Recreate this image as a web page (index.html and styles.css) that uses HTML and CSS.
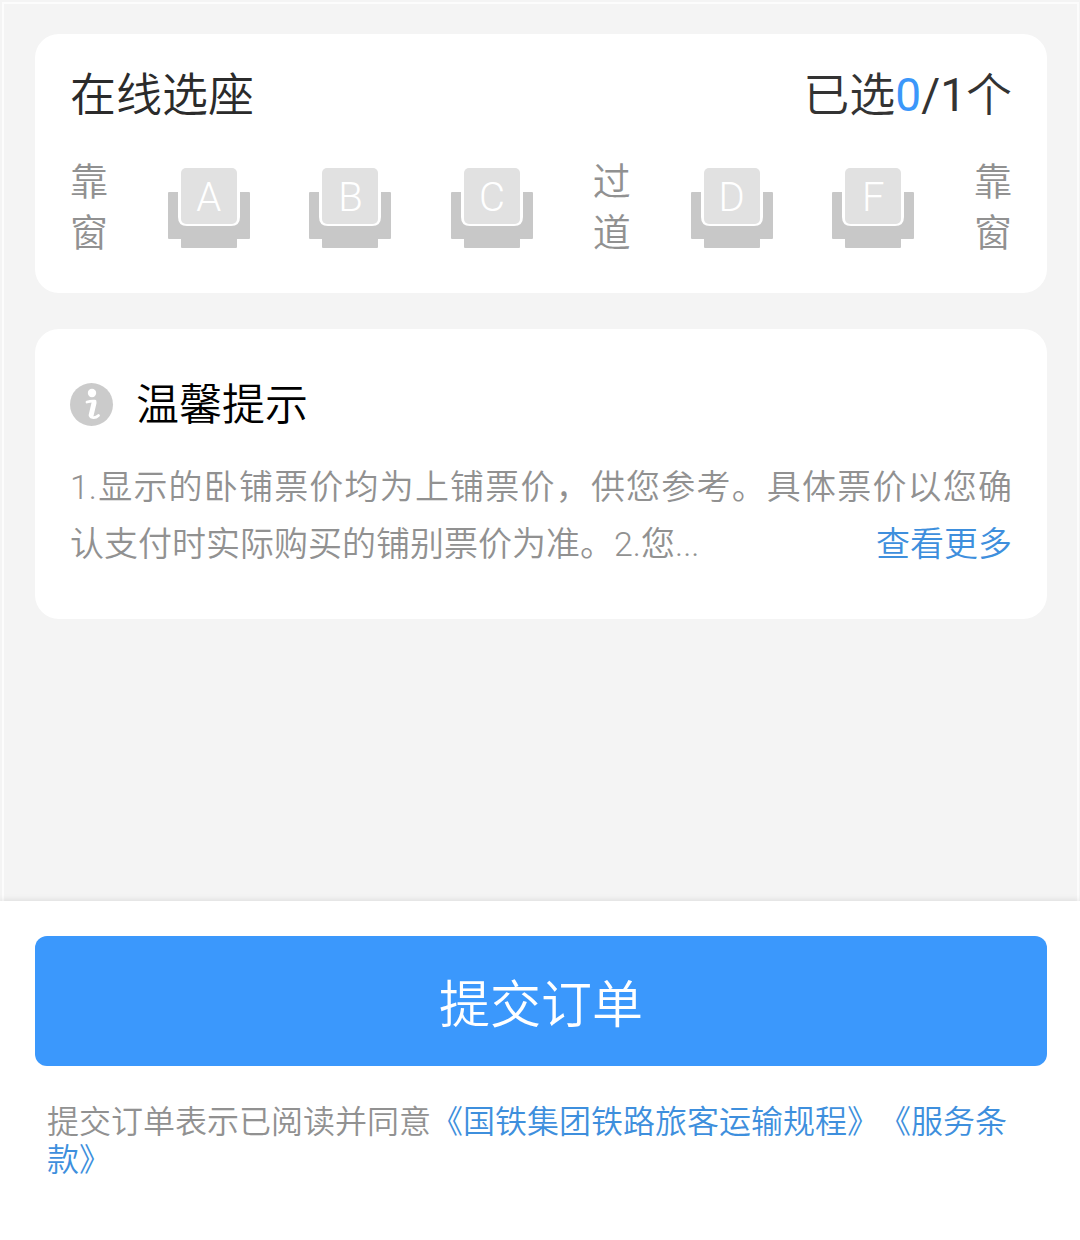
FILE: index.html
```html
<!DOCTYPE html>
<html lang="zh-CN">
<head>
<meta charset="utf-8">
<meta name="viewport" content="width=device-width, initial-scale=1">
<title>在线选座</title>
<link rel="stylesheet" href="styles.css">
</head>
<body>
<svg class="sprite" aria-hidden="true">
  <symbol id="seat" viewBox="0 0 82 80">
    <path fill="#c8c8c8" d="M1 24h9v25q0 9 9 9h44q9 0 9-9V24h9q1 0 1 1v45q0 1-1 1H69v8q0 1-1 1H14q-1 0-1-1v-8H1q-1 0-1-1V25q0-1 1-1z"/>
    <rect x="13" y="0" width="56" height="56" rx="5" fill="#e1e1e1"/>
  </symbol>
</svg>
<main class="content">
  <section class="card seats">
    <header class="card-head">
      <h1 class="title">在线选座</h1>
      <p class="count">已选<span class="digits"><span class="count-now">0</span>/1</span>个</p>
    </header>
    <div class="seat-row">
      <span class="side">靠窗</span>
      <button class="seat" type="button"><svg class="seat-icon" aria-hidden="true"><use href="#seat"/></svg><span class="seat-letter">A</span></button>
      <button class="seat" type="button"><svg class="seat-icon" aria-hidden="true"><use href="#seat"/></svg><span class="seat-letter">B</span></button>
      <button class="seat" type="button"><svg class="seat-icon" aria-hidden="true"><use href="#seat"/></svg><span class="seat-letter">C</span></button>
      <span class="side">过道</span>
      <button class="seat" type="button"><svg class="seat-icon" aria-hidden="true"><use href="#seat"/></svg><span class="seat-letter">D</span></button>
      <button class="seat" type="button"><svg class="seat-icon" aria-hidden="true"><use href="#seat"/></svg><span class="seat-letter">F</span></button>
      <span class="side">靠窗</span>
    </div>
  </section>
  <section class="card tips">
    <h2 class="tips-title">
      <svg class="info" viewBox="0 0 44 44" aria-hidden="true">
        <circle cx="21.500" cy="21.500" r="21.500" fill="#cbcbcb"/>
        <circle cx="22" cy="10" r="4.200" fill="#fff"/>
        <path d="M17 19q4-1.200 8-.8M21 34q4 1.800 7.500-1.500" fill="none" stroke="#fff" stroke-width="2.800" stroke-linecap="round"/>
        <path d="M24 20L21.200 32" fill="none" stroke="#fff" stroke-width="5" stroke-linecap="round"/>
      </svg>
      温馨提示
    </h2>
    <p class="tips-text">1.显示的卧铺票价均为上铺票价，供您参考。具体票价以您确认支付时实际购买的铺别票价为准。2.您...<a class="more" href="#more">查看更多</a></p>
  </section>
</main>
<footer class="footer">
  <button class="submit" type="button">提交订单</button>
  <p class="agree">提交订单表示已阅读并同意<a href="#rules">《国铁集团铁路旅客运输规程》</a><a href="#terms">《服务条款》</a></p>
</footer>
</body>
</html>
```
FILE: styles.css
```css
* {
  box-sizing: border-box;
}

body {
  margin: 0;
  min-height: 100vh;
  display: flex;
  flex-direction: column;
  background: #f4f4f4;
  font-family: Roboto, "Noto Sans CJK SC", sans-serif;
  font-weight: 350;
  text-spacing-trim: space-all;
}

h1, h2, p {
  margin: 0;
  font-weight: inherit;
}

a {
  color: #3e8fdd;
  text-decoration: none;
}

button {
  border: 0;
  padding: 0;
  font: inherit;
  cursor: pointer;
}

.sprite {
  display: none;
}

.content {
  flex: 1;
  display: flex;
  flex-direction: column;
  gap: 36px;
  margin: 2px 1px 0 2px;
  padding: 30px 30px 36px 31px;
  border: 2px solid #fcfcfc;
  border-bottom: 0;
}

.card {
  padding: 0 35px;
  border-radius: 24px;
  background: #fff;
}

.seats {
  padding-top: 32px;
  padding-bottom: 34px;
}

.card-head {
  display: flex;
  justify-content: space-between;
  font-size: 46px;
  line-height: 58px;
}

.title {
  font-size: 46px;
  color: #2b2b2b;
}

.count {
  color: #333;
}

.digits {
  font-weight: 400;
}

.count-now {
  color: #3b97fa;
}

.seat-row {
  display: flex;
  justify-content: space-between;
  align-items: center;
  margin-top: 33px;
}

.side {
  width: 38px;
  font-size: 38px;
  line-height: 51px;
  color: #919191;
}

.seat {
  display: grid;
  width: 82px;
  height: 80px;
  background: none;
}

.seat-icon {
  grid-area: 1 / 1;
  width: 82px;
  height: 80px;
}

.seat-letter {
  grid-area: 1 / 1;
  font-size: 40px;
  font-weight: 300;
  line-height: 60px;
  color: #fff;
}

.tips {
  padding-top: 46px;
  padding-bottom: 46px;
}

.tips-title {
  display: flex;
  align-items: center;
  gap: 22px;
  font-size: 43px;
  line-height: 60px;
  color: #000;
}

.info {
  width: 44px;
  height: 44px;
}

.tips-text {
  margin-top: 24px;
  font-size: 34px;
  line-height: 57px;
  text-align: justify;
  color: #919191;
}

.more {
  float: right;
}

.footer {
  padding: 35px 33px 61px 35px;
  background: #fff;
  box-shadow: 0 -1px 6px rgba(0, 0, 0, 0.1);
}

.submit {
  display: block;
  width: 100%;
  height: 130px;
  border-radius: 12px;
  background: #3b98fc;
  color: #fff;
  font-size: 51px;
}

.agree {
  margin-top: 37px;
  padding: 0 12px;
  font-size: 32px;
  line-height: 38px;
  color: #919191;
}
```
